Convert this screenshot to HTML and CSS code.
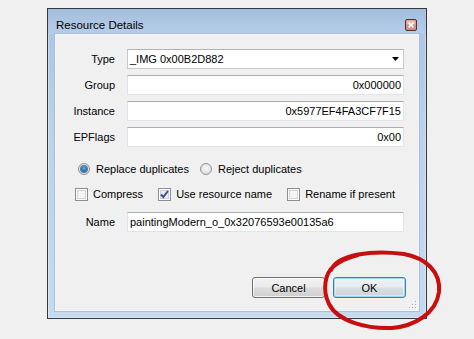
FILE: index.html
```html
<!DOCTYPE html>
<html lang="en-US">
<head>
   <meta charset="UTF-8">
   <meta name="viewport" content="width=device-width, initial-scale=1.0">
   <title>Resource Details</title>
   <link rel="stylesheet" href="styles.css">
</head>
<body>
   <div class="window">
      <div class="titlebar">
         <span class="title">Resource Details</span>
         <span class="close-btn">
            <svg width="12" height="12" viewBox="0 0 12 12">
               <rect x="0.5" y="0.5" width="11" height="11" rx="1.5" fill="#cf8f86" stroke="#55302c"/>
               <rect x="1.5" y="1.5" width="9" height="4" fill="#e6b9b2"/>
               <path d="M3.6 3.6 L8.4 8.4 M8.4 3.6 L3.6 8.4" stroke="#fff" stroke-width="1.8"/>
            </svg>
         </span>
      </div>
      <div class="client">
         <div class="fields">
            <label>Type</label>
            <div class="combo">
               <span>_IMG 0x00B2D882</span>
               <svg width="7" height="4" viewBox="0 0 7 4"><path d="M0 0 H7 L3.5 4 Z" fill="#000"/></svg>
            </div>
            <label>Group</label>
            <div class="textbox right">0x000000</div>
            <label>Instance</label>
            <div class="textbox right">0x5977EF4FA3CF7F15</div>
            <label>EPFlags</label>
            <div class="textbox right">0x00</div>
         </div>

         <div class="option-row radios">
            <span class="option"><span class="radio checked"></span>Replace duplicates</span>
            <span class="option"><span class="radio"></span>Reject duplicates</span>
         </div>

         <div class="option-row checks">
            <span class="option"><span class="checkbox"></span>Compress</span>
            <span class="option">
               <span class="checkbox checked">
                  <svg width="11" height="11" viewBox="0 0 11 11"><path d="M2 5.5 L4.3 8 L9 2" fill="none" stroke="#3a4e86" stroke-width="2"/></svg>
               </span>Use resource name
            </span>
            <span class="option"><span class="checkbox"></span>Rename if present</span>
         </div>

         <div class="fields name-row">
            <label>Name</label>
            <div class="textbox">paintingModern_o_0x32076593e00135a6</div>
         </div>

         <div class="buttons">
            <button class="btn">Cancel</button>
            <button class="btn default">OK</button>
         </div>

         <svg class="grip" width="8" height="8" viewBox="0 0 8 8">
            <g fill="#fff">
               <rect x="7" y="1" width="1" height="1"/><rect x="7" y="4" width="1" height="1"/><rect x="4" y="4" width="1" height="1"/>
               <rect x="7" y="7" width="1" height="1"/><rect x="4" y="7" width="1" height="1"/><rect x="1" y="7" width="1" height="1"/>
            </g>
            <g fill="#a8a8a8">
               <rect x="6" y="0" width="1" height="1"/><rect x="6" y="3" width="1" height="1"/><rect x="3" y="3" width="1" height="1"/>
               <rect x="6" y="6" width="1" height="1"/><rect x="3" y="6" width="1" height="1"/><rect x="0" y="6" width="1" height="1"/>
            </g>
         </svg>
      </div>
   </div>

   <!-- hand drawn marker round the OK button -->
   <svg class="marker" width="474" height="339" viewBox="0 0 474 339">
      <path d="M331 270 C338 254, 372 250, 404 254 C426 258, 441 272, 439 292 C436 314, 414 326, 392 328 C368 329, 338 322, 329 304 C322 290, 325 273, 334 266 C340 261, 350 257, 358 255"
            fill="none" stroke="#c80e0e" stroke-width="4" stroke-linecap="round"/>
   </svg>
</body>
</html>
```

FILE: styles.css
```css
* {
   box-sizing: border-box;
}
html, body {
   height: 100%;
}
body {
   margin: 0;
   padding: 8px 0 0 47px;
   background: #f0f0f0;
   font-family: "Liberation Sans", Arial, sans-serif;
   font-size: 11px;
   color: #000;
   position: relative;
   overflow: hidden;
}
.window {
   width: 380px;
   height: 311px;
   border: 1px solid #33393e;
   background: linear-gradient(to bottom, #aac3e1, #bcd2ec 40%, #c6daef);
   box-shadow: inset 0 0 0 1px rgba(255, 255, 255, 0.35);
   display: flex;
   flex-direction: column;
}
.titlebar {
   height: 25px;
   flex: none;
   display: flex;
   align-items: center;
   justify-content: space-between;
   padding: 6px 9px 0 8px;
   background: linear-gradient(to bottom, #a3bddc, #b7cee9);
}
.title {
   font-size: 11.5px;
}
.close-btn {
   display: flex;
   width: 12px;
   height: 12px;
}
.client {
   position: relative;
   flex: 1;
   margin: 0 7px 7px 7px;
   background: #f0f0f0;
   border: 1px solid #f6f6f6;
   box-shadow: 0 0 0 1px #a7bfdc;
   display: flex;
   flex-direction: column;
   padding: 14px 14px 12px 0;
}
.fields {
   display: grid;
   grid-template-columns: 59px 1fr;
   column-gap: 12px;
   row-gap: 6px;
   grid-auto-rows: 20px;
}
.fields label {
   display: flex;
   align-items: center;
   justify-content: flex-end;
}
.textbox, .combo {
   background: #fff;
   border: 1px solid #e2e3ea;
   border-top-color: #abadb3;
   display: flex;
   align-items: center;
   padding: 0 2px;
   white-space: nowrap;
   overflow: hidden;
}
.textbox.right {
   justify-content: flex-end;
}
.combo {
   justify-content: space-between;
   border-color: #c9c9c9;
   border-top-color: #b4b4b4;
   padding-right: 4px;
}
.option-row {
   display: flex;
   align-items: center;
   height: 16px;
}
.option {
   display: flex;
   align-items: center;
}
.radios {
   margin-top: 14px;
   padding-left: 22px;
   gap: 11px;
}
.radios .option {
   gap: 6px;
}
.radio {
   width: 12px;
   height: 12px;
   border-radius: 50%;
   border: 1px solid #8f9296;
   background: radial-gradient(circle at 50% 40%, #f7f7f7, #d6d6d6);
   display: flex;
   align-items: center;
   justify-content: center;
}
.radio.checked::after {
   content: "";
   width: 6px;
   height: 6px;
   border-radius: 50%;
   background: radial-gradient(circle at 50% 40%, #6fb3e6, #1d5a8d 70%);
   box-shadow: 0 0 0 1px #4a7eaa;
}
.checks {
   margin-top: 9px;
   padding-left: 19px;
   gap: 15px;
}
.checks .option {
   gap: 5px;
}
.checkbox {
   width: 13px;
   height: 13px;
   border: 1px solid #8e8f8f;
   background: #f4f4f4;
   box-shadow: inset 0 0 0 1px #fff, inset 0 0 0 2px #d4d4d4;
   display: flex;
   align-items: center;
   justify-content: center;
}
.checkbox.checked {
   background: #e9eef7;
   box-shadow: inset 0 0 0 1px #fff, inset 0 0 0 2px #c7d2e6;
}
.name-row {
   margin-top: 10px;
}
.buttons {
   margin-top: auto;
   margin-right: -2px;
   display: flex;
   justify-content: flex-end;
   gap: 8px;
}
.btn {
   width: 73px;
   height: 21px;
   font-family: "Liberation Sans", Arial, sans-serif;
   font-size: 11px;
   color: #000;
   border: 1px solid #707070;
   border-radius: 3px;
   background: linear-gradient(to bottom, #f2f2f2 0%, #ebebeb 48%, #dddddd 52%, #cfcfcf 100%);
   box-shadow: inset 0 0 0 1px rgba(255, 255, 255, 0.7);
   padding: 0;
}
.btn.default {
   border-color: #3c7fb1;
   box-shadow: inset 0 0 0 1px #9fd9ef, inset 0 0 0 2px rgba(255, 255, 255, 0.4);
   background: linear-gradient(to bottom, #f0f3f5 0%, #e6ebee 48%, #d7dfe4 52%, #cad5dc 100%);
}
.grip {
   position: absolute;
   right: 1px;
   bottom: 1px;
}
.marker {
   position: absolute;
   top: 0;
   left: 0;
   pointer-events: none;
}
```
